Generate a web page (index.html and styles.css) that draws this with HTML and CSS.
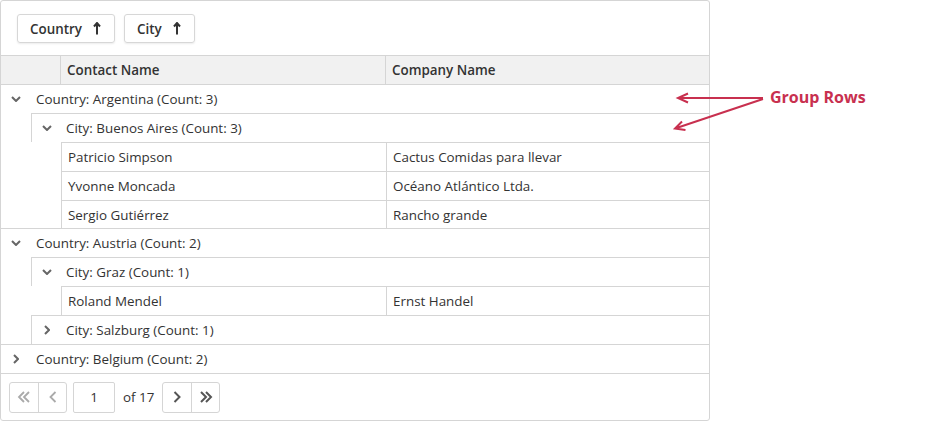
FILE: index.html
```html
<!DOCTYPE html>
<html>
<head>
<meta charset="utf-8">
<link rel="stylesheet" href="styles.css">
</head>
<body>
<div class="page">
  <div class="grid">
    <div class="group-panel">
      <div class="chip">Country <svg class="sort" width="8" height="13" viewBox="0 0 8 13"><path d="M4 1 L4 12.5 M1 4.5 L4 1 L7 4.5" fill="none" stroke="#333" stroke-width="2"/></svg></div>
      <div class="chip">City <svg class="sort" width="8" height="13" viewBox="0 0 8 13"><path d="M4 1 L4 12.5 M1 4.5 L4 1 L7 4.5" fill="none" stroke="#333" stroke-width="2"/></svg></div>
    </div>
    <div class="header">
      <div class="hcell hspacer"></div>
      <div class="hcell hcontact">Contact Name</div>
      <div class="hcell hcompany">Company Name</div>
    </div>

    <div class="row">
      <div class="area top">
        <span class="toggle"><svg width="10" height="6" viewBox="0 0 10 6"><path d="M1 1 L5 5 L9 1" fill="none" stroke="#666" stroke-width="2"/></svg></span>
        <span class="gtext">Country: Argentina (Count: 3)</span>
      </div>
    </div>
    <div class="row">
      <div class="indent"></div>
      <div class="area nested">
        <span class="toggle"><svg width="10" height="6" viewBox="0 0 10 6"><path d="M1 1 L5 5 L9 1" fill="none" stroke="#666" stroke-width="2"/></svg></span>
        <span class="gtext">City: Buenos Aires (Count: 3)</span>
      </div>
    </div>
    <div class="row">
      <div class="indent"></div><div class="indent"></div>
      <div class="area nested data">
        <div class="cell contact">Patricio Simpson</div>
        <div class="cell company">Cactus Comidas para llevar</div>
      </div>
    </div>
    <div class="row">
      <div class="indent"></div><div class="indent"></div>
      <div class="area nested data">
        <div class="cell contact">Yvonne Moncada</div>
        <div class="cell company">Océano Atlántico Ltda.</div>
      </div>
    </div>
    <div class="row">
      <div class="indent"></div><div class="indent"></div>
      <div class="area nested data">
        <div class="cell contact">Sergio Gutiérrez</div>
        <div class="cell company">Rancho grande</div>
      </div>
    </div>

    <div class="row">
      <div class="area top">
        <span class="toggle"><svg width="10" height="6" viewBox="0 0 10 6"><path d="M1 1 L5 5 L9 1" fill="none" stroke="#666" stroke-width="2"/></svg></span>
        <span class="gtext">Country: Austria (Count: 2)</span>
      </div>
    </div>
    <div class="row">
      <div class="indent"></div>
      <div class="area nested">
        <span class="toggle"><svg width="10" height="6" viewBox="0 0 10 6"><path d="M1 1 L5 5 L9 1" fill="none" stroke="#666" stroke-width="2"/></svg></span>
        <span class="gtext">City: Graz (Count: 1)</span>
      </div>
    </div>
    <div class="row">
      <div class="indent"></div><div class="indent"></div>
      <div class="area nested data">
        <div class="cell contact">Roland Mendel</div>
        <div class="cell company">Ernst Handel</div>
      </div>
    </div>
    <div class="row">
      <div class="indent"></div>
      <div class="area nested">
        <span class="toggle"><svg width="6" height="10" viewBox="0 0 6 10"><path d="M1 1 L5 5 L1 9" fill="none" stroke="#666" stroke-width="2"/></svg></span>
        <span class="gtext">City: Salzburg (Count: 1)</span>
      </div>
    </div>
    <div class="row">
      <div class="area top">
        <span class="toggle"><svg width="6" height="10" viewBox="0 0 6 10"><path d="M1 1 L5 5 L1 9" fill="none" stroke="#666" stroke-width="2"/></svg></span>
        <span class="gtext">Country: Belgium (Count: 2)</span>
      </div>
    </div>

    <div class="pager">
      <div class="btn-group">
        <div class="pbtn"><svg width="14" height="12" viewBox="0 0 14 12"><path d="M7 1 L2 6 L7 11 M12 1 L7 6 L12 11" fill="none" stroke="#aaa" stroke-width="1.8"/></svg></div>
        <div class="pbtn"><svg width="8" height="12" viewBox="0 0 8 12"><path d="M6.5 1 L1.5 6 L6.5 11" fill="none" stroke="#aaa" stroke-width="1.8"/></svg></div>
      </div>
      <div class="page-input">1</div>
      <span class="of">of 17</span>
      <div class="btn-group">
        <div class="pbtn"><svg width="8" height="12" viewBox="0 0 8 12"><path d="M1.5 1 L6.5 6 L1.5 11" fill="none" stroke="#555" stroke-width="2"/></svg></div>
        <div class="pbtn"><svg width="14" height="12" viewBox="0 0 14 12"><path d="M2 1 L7 6 L2 11 M7 1 L12 6 L7 11" fill="none" stroke="#555" stroke-width="2"/></svg></div>
      </div>
    </div>
  </div>

  <div class="callout">
    <svg class="arrows" width="100" height="60" viewBox="0 0 100 60">
      <path d="M93 18 L8 18 M18 13.5 L8 18 L18 22.5" fill="none" stroke="#c8304f" stroke-width="2"/>
      <path d="M93 19 L5 48.5 M12 41.5 L5 48.5 L15.5 50" fill="none" stroke="#c8304f" stroke-width="2"/>
    </svg>
    <span class="callout-text">Group Rows</span>
  </div>
</div>
</body>
</html>
```

FILE: styles.css
```css
* { box-sizing: border-box; }
html, body { margin: 0; padding: 0; background: #fff; }
body {
  font-family: "Open Sans", "Noto Sans", sans-serif;
  font-size: 13.4px;
  color: #333;
}
.page { position: relative; width: 950px; height: 421px; }
.grid {
  width: 710px;
  height: 421px;
  border: 1px solid #d5d5d5;
  border-radius: 3px;
  display: flex;
  flex-direction: column;
}
.group-panel {
  height: 54px;
  display: flex;
  align-items: flex-start;
  gap: 9px;
  padding: 13px 0 0 16px;
}
.chip {
  height: 29px;
  display: flex;
  align-items: center;
  gap: 11px;
  padding: 0 13px 0 12px;
  border: 1px solid #d7d7d7;
  border-radius: 3px;
  box-shadow: 0 1px 2px rgba(0,0,0,0.08);
  font-weight: 600;
  color: #333;
}
.sort { display: block; }
.header {
  display: flex;
  height: 29px;
  border-top: 1px solid #d5d5d5;
  background: #f1f1f1;
}
.hcell {
  display: flex;
  align-items: center;
  font-weight: 600;
  padding-left: 6px;
}
.hspacer { width: 59px; flex: none; }
.hcontact { width: 325px; flex: none; border-left: 1px solid #d5d5d5; }
.hcompany { flex: 1; border-left: 1px solid #d5d5d5; }
.row { display: flex; height: 28.9px; }
.indent { width: 30px; flex: none; }
.area {
  flex: 1;
  display: flex;
  align-items: center;
  border-top: 1px solid #d5d5d5;
}
.area.nested { border-left: 1px solid #d5d5d5; }
.toggle {
  width: 30px;
  flex: none;
  display: flex;
  justify-content: center;
  align-items: center;
}
.area.nested .toggle { width: 29px; }
.gtext { padding-left: 5px; }
.data { align-items: stretch; }
.cell { display: flex; align-items: center; padding-left: 6px; }
.contact { width: 324px; flex: none; }
.company { flex: 1; border-left: 1px solid #d5d5d5; }
.pager {
  flex: 1;
  border-top: 1px solid #d5d5d5;
  display: flex;
  align-items: flex-start;
  padding: 8px 0 0 8px;
  gap: 6px;
}
.btn-group {
  display: flex;
  border: 1px solid #d5d5d5;
  border-radius: 3px;
  height: 31px;
}
.pbtn {
  width: 28px;
  display: flex;
  align-items: center;
  justify-content: center;
}
.pbtn + .pbtn { border-left: 1px solid #d5d5d5; }
.page-input {
  width: 42px;
  height: 31px;
  border: 1px solid #d5d5d5;
  border-radius: 2px;
  display: flex;
  align-items: center;
  justify-content: center;
}
.of { height: 31px; display: flex; align-items: center; padding: 0 2px; }
.callout {
  position: absolute;
  left: 670px;
  top: 80px;
  display: flex;
}
.arrows { position: absolute; left: 0; top: 0; overflow: visible; }
.callout-text {
  position: absolute;
  left: 100px;
  top: 6px;
  font-weight: 700;
  font-size: 16px;
  color: #c8304f;
  white-space: nowrap;
}
```
